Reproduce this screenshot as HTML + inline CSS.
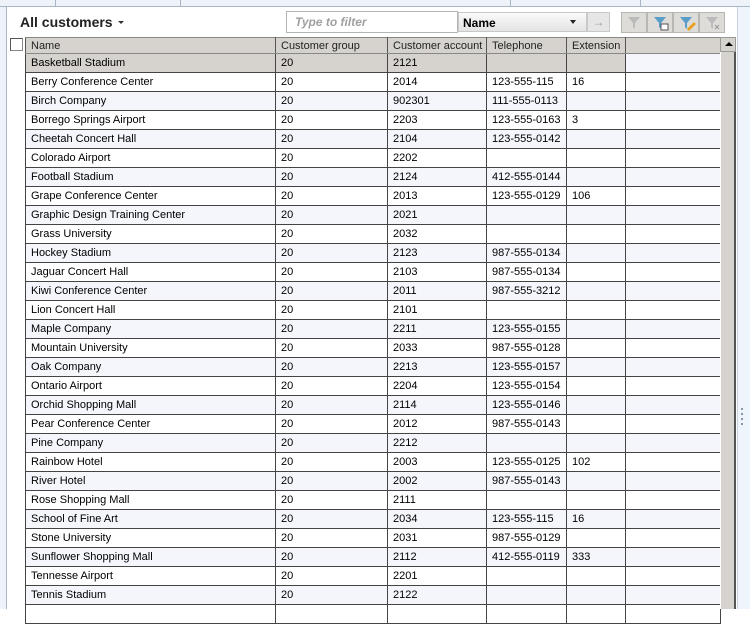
<!DOCTYPE html>
<html><head><meta charset="utf-8"><style>
*{margin:0;padding:0;box-sizing:border-box}
body{width:750px;height:609px;overflow:hidden;background:#fff;font-family:"Liberation Sans",Tahoma,sans-serif;font-size:11px;color:#000;position:relative}
.top{position:absolute;left:0;top:0;width:750px;height:7px;background:#eef3fa;border-bottom:1px solid #a9b6c8}
.top i{position:absolute;top:0;height:6px;width:1px;background:#a9b6c8}
.left{position:absolute;left:0;top:7px;width:7px;height:602px;background:#eef3fa;border-right:1px solid #a9b6c8}
.right{position:absolute;left:737px;top:7px;width:13px;height:602px;background:#eef5fd;border-left:1px solid #c8d4e4}
.dot{position:absolute;left:3px;width:2px;height:2px;background:#8a96a8}
h1{position:absolute;left:20px;top:14px;font-size:14px;font-weight:bold;color:#222}
.caret{position:absolute;left:118px;top:21px;border:3px solid transparent;border-top:3px solid #333}
.filter{position:absolute;left:286px;top:11px;width:172px;height:22px;border:1px solid #b4b4b4;font-style:italic;font-weight:bold;color:#a0a0a0;font-size:12px;padding:3px 0 0 8px}
.sel{position:absolute;left:458px;top:12px;width:129px;height:20px;background:linear-gradient(#fafafa,#e4e4e4);border:1px solid #c8c8c8;font-weight:bold;font-size:12px;padding:3px 0 0 4px}
.sel:after{content:"";position:absolute;right:10px;top:7px;border:3px solid transparent;border-top:4px solid #222}
.go{position:absolute;left:587px;top:12px;width:23px;height:20px;background:#e6e6e6;border:1px solid #c8c8c8;color:#999;text-align:center;font-size:12px;line-height:18px}
.fb{position:absolute;top:12px;width:26px;height:21px;background:#dedcd8;border:1px solid #b8b6b2}
.chk{position:absolute;left:10px;top:38px;width:13px;height:13px;border:1px solid #888;background:#fff;border-top-color:#555;border-left-color:#555}
table{position:absolute;left:25px;top:37px;border-collapse:collapse;table-layout:fixed}
td,th{border:1px solid #444;height:19px;padding:0 0 0 5px;font-weight:normal;text-align:left;white-space:nowrap;overflow:hidden;font-size:11px}
th{background:#d6d3ce;height:16px;border-color:#888 #555 #888 #555;color:#222}
tr:nth-child(even) td{background:#f4f6fc}
tr.s td{background:#d6d3ce}
.sb{position:absolute;left:720px;top:37px;width:16px;height:572px;background:#d6d3ce;border-left:1px solid #fff;border-right:2px solid #555}
.sbu{position:absolute;left:720px;top:37px;width:16px;height:15px;background:#d6d3ce;border:1px solid #999}
.sbu:after{content:"";position:absolute;left:4px;top:4px;border:4px solid transparent;border-bottom:4px solid #000;border-top:0}
</style></head><body>
<div class="top"><i style="left:55px"></i><i style="left:180px"></i><i style="left:510px"></i><i style="left:640px"></i></div>
<div class="left"></div>
<div class="right"><div class="dot" style="top:401px"></div><div class="dot" style="top:406px"></div><div class="dot" style="top:411px"></div><div class="dot" style="top:416px"></div></div>
<h1>All customers</h1><div class="caret"></div>
<div class="filter">Type to filter</div>
<div class="sel">Name</div>
<div class="go">→</div>
<div class="fb" style="left:621px"><svg width="24" height="19"><path d="M6 4h12l-5 6v6l-2-2v-4z" fill="#bbb"/></svg></div>
<div class="fb" style="left:647px"><svg width="24" height="19"><path d="M6 4h12l-5 6v6l-2-2v-4z" fill="#5a9ec8"/><rect x="13" y="11" width="7" height="6" fill="#fff" stroke="#555"/></svg></div>
<div class="fb" style="left:673px"><svg width="24" height="19"><path d="M6 4h12l-5 6v6l-2-2v-4z" fill="#5a9ec8"/><path d="M13 16l7-7 2 2-7 7z" fill="#e8a020"/></svg></div>
<div class="fb" style="left:699px"><svg width="24" height="19"><path d="M6 4h12l-5 6v6l-2-2v-4z" fill="#bbb"/><path d="M15 12l4 4M19 12l-4 4" stroke="#999"/></svg></div>
<div class="chk"></div>
<table>
<colgroup><col style="width:250px"><col style="width:112px"><col style="width:99px"><col style="width:80px"><col style="width:59px"><col style="width:95px"></colgroup>
<tr><th>Name</th><th>Customer group</th><th>Customer account</th><th>Telephone</th><th>Extension</th><th></th></tr>
<tr class="s"><td>Basketball Stadium</td><td>20</td><td>2121</td><td></td><td></td><td style="background:#f4f6fc"></td></tr>
<tr><td>Berry Conference Center</td><td>20</td><td>2014</td><td>123-555-115</td><td>16</td><td></td></tr>
<tr><td>Birch Company</td><td>20</td><td>902301</td><td>111-555-0113</td><td></td><td></td></tr>
<tr><td>Borrego Springs Airport</td><td>20</td><td>2203</td><td>123-555-0163</td><td>3</td><td></td></tr>
<tr><td>Cheetah Concert Hall</td><td>20</td><td>2104</td><td>123-555-0142</td><td></td><td></td></tr>
<tr><td>Colorado Airport</td><td>20</td><td>2202</td><td></td><td></td><td></td></tr>
<tr><td>Football Stadium</td><td>20</td><td>2124</td><td>412-555-0144</td><td></td><td></td></tr>
<tr><td>Grape Conference Center</td><td>20</td><td>2013</td><td>123-555-0129</td><td>106</td><td></td></tr>
<tr><td>Graphic Design Training Center</td><td>20</td><td>2021</td><td></td><td></td><td></td></tr>
<tr><td>Grass University</td><td>20</td><td>2032</td><td></td><td></td><td></td></tr>
<tr><td>Hockey Stadium</td><td>20</td><td>2123</td><td>987-555-0134</td><td></td><td></td></tr>
<tr><td>Jaguar Concert Hall</td><td>20</td><td>2103</td><td>987-555-0134</td><td></td><td></td></tr>
<tr><td>Kiwi Conference Center</td><td>20</td><td>2011</td><td>987-555-3212</td><td></td><td></td></tr>
<tr><td>Lion Concert Hall</td><td>20</td><td>2101</td><td></td><td></td><td></td></tr>
<tr><td>Maple Company</td><td>20</td><td>2211</td><td>123-555-0155</td><td></td><td></td></tr>
<tr><td>Mountain University</td><td>20</td><td>2033</td><td>987-555-0128</td><td></td><td></td></tr>
<tr><td>Oak Company</td><td>20</td><td>2213</td><td>123-555-0157</td><td></td><td></td></tr>
<tr><td>Ontario Airport</td><td>20</td><td>2204</td><td>123-555-0154</td><td></td><td></td></tr>
<tr><td>Orchid Shopping Mall</td><td>20</td><td>2114</td><td>123-555-0146</td><td></td><td></td></tr>
<tr><td>Pear Conference Center</td><td>20</td><td>2012</td><td>987-555-0143</td><td></td><td></td></tr>
<tr><td>Pine Company</td><td>20</td><td>2212</td><td></td><td></td><td></td></tr>
<tr><td>Rainbow Hotel</td><td>20</td><td>2003</td><td>123-555-0125</td><td>102</td><td></td></tr>
<tr><td>River Hotel</td><td>20</td><td>2002</td><td>987-555-0143</td><td></td><td></td></tr>
<tr><td>Rose Shopping Mall</td><td>20</td><td>2111</td><td></td><td></td><td></td></tr>
<tr><td>School of Fine Art</td><td>20</td><td>2034</td><td>123-555-115</td><td>16</td><td></td></tr>
<tr><td>Stone University</td><td>20</td><td>2031</td><td>987-555-0129</td><td></td><td></td></tr>
<tr><td>Sunflower Shopping Mall</td><td>20</td><td>2112</td><td>412-555-0119</td><td>333</td><td></td></tr>
<tr><td>Tennesse Airport</td><td>20</td><td>2201</td><td></td><td></td><td></td></tr>
<tr><td>Tennis Stadium</td><td>20</td><td>2122</td><td></td><td></td><td></td></tr>
<tr><td></td><td></td><td></td><td></td><td></td><td></td></tr>
</table>
<div class="sb"></div>
<div class="sbu"></div>
</body></html>
